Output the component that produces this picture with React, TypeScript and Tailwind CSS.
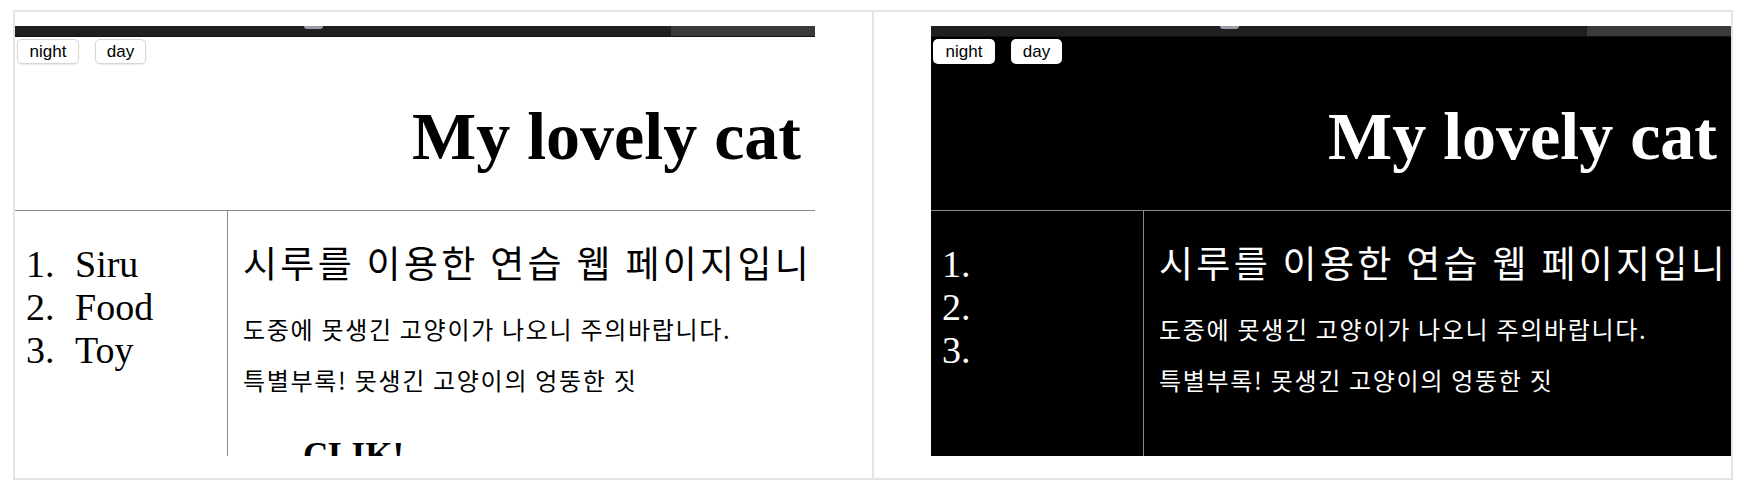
const serif = "font-['Liberation_Serif','Times_New_Roman',serif]";
const sans = "font-['Liberation_Sans',Arial,sans-serif]";
const kr = "font-['Noto_Sans_CJK_KR','Noto_Sans',sans-serif]";

const items = ["Siru", "Food", "Toy"];

const Shot = ({ dark }: { dark: boolean }) => {
  return (
    <div className={`w-[800px] h-[430px] overflow-hidden flex flex-col ${dark ? "bg-black text-white" : "bg-white text-black"}`}>
      {/* browser strip */}
      <div className="relative flex h-[11px] shrink-0 border-b border-[#121212]">
        <div className="flex-1 bg-[#1f1f1f]" />
        <div className="w-[144px] bg-[#3a3a3a]" />
        <div className="absolute left-[289px] top-0 w-[19px] h-[3px] rounded-b-[3px] bg-[#9c9caa]" />
      </div>

      {/* header */}
      <div className="h-[174px] shrink-0 border-b border-[#8a8a8a]">
        <div className={`flex gap-[16px] pl-[2px] pt-[2px] ${sans}`}>
          <button className={`w-[62px] h-[25px] rounded-[5px] bg-white text-black text-[17px] leading-none ${dark ? "" : "border border-[#d6d6d6] shadow-[0_1px_1px_rgba(0,0,0,0.08)]"}`}>
            night
          </button>
          <button className={`w-[51px] h-[25px] rounded-[5px] bg-white text-black text-[17px] leading-none ${dark ? "" : "border border-[#d6d6d6] shadow-[0_1px_1px_rgba(0,0,0,0.08)]"}`}>
            day
          </button>
        </div>
        <h1 className={`mt-[38px] pl-[397px] whitespace-nowrap text-[68px] leading-[68px] font-bold ${serif}`}>My lovely cat</h1>
      </div>

      {/* body */}
      <div className="flex flex-1 min-h-0">
        <div className="w-[213px] shrink-0 border-r border-[#8a8a8a] pt-[32px]">
          <ol className={`text-[38px] leading-[43px] ${serif}`}>
            {items.map((it, i) => (
              <li key={it} className="flex">
                <span className="w-[49px] pl-[11px] box-content">{i + 1}.</span>
                <span className={dark ? "text-black" : ""}>{it}</span>
              </li>
            ))}
          </ol>
        </div>
        <div className="flex-1 min-w-0 pl-[15px] pt-[29px] whitespace-nowrap">
          <h2 className={`text-[37px] leading-[44px] font-normal tracking-[3.3px] ${kr}`}>시루를 이용한 연습 웹 페이지입니다</h2>
          <p className={`mt-[30px] text-[24px] leading-[30px] tracking-[1.7px] ${kr}`}>도중에 못생긴 고양이가 나오니 주의바랍니다.</p>
          <p className={`mt-[21px] text-[24px] leading-[30px] tracking-[1.7px] ${kr}`}>특별부록! 못생긴 고양이의 엉뚱한 짓</p>
          {!dark && (
            <h3 className={`mt-[41px] pl-[60px] text-[35px] leading-[40px] font-bold ${serif}`}>CLIK!</h3>
          )}
        </div>
      </div>
    </div>
  );
};

export default function App() {
  return (
    <div className="w-[1746px] h-[494px] bg-white pt-[10px] pl-[13px]">
      <div className="flex w-[1720px] h-[470px] border-2 border-[#e4e4e4]">
        <div className="w-[857px] pt-[14px] flex justify-start">
          <Shot dark={false} />
        </div>
        <div className="w-[2px] bg-[#e4e4e4]" />
        <div className="w-[857px] pt-[14px] flex justify-end">
          <Shot dark />
        </div>
      </div>
    </div>
  );
}
